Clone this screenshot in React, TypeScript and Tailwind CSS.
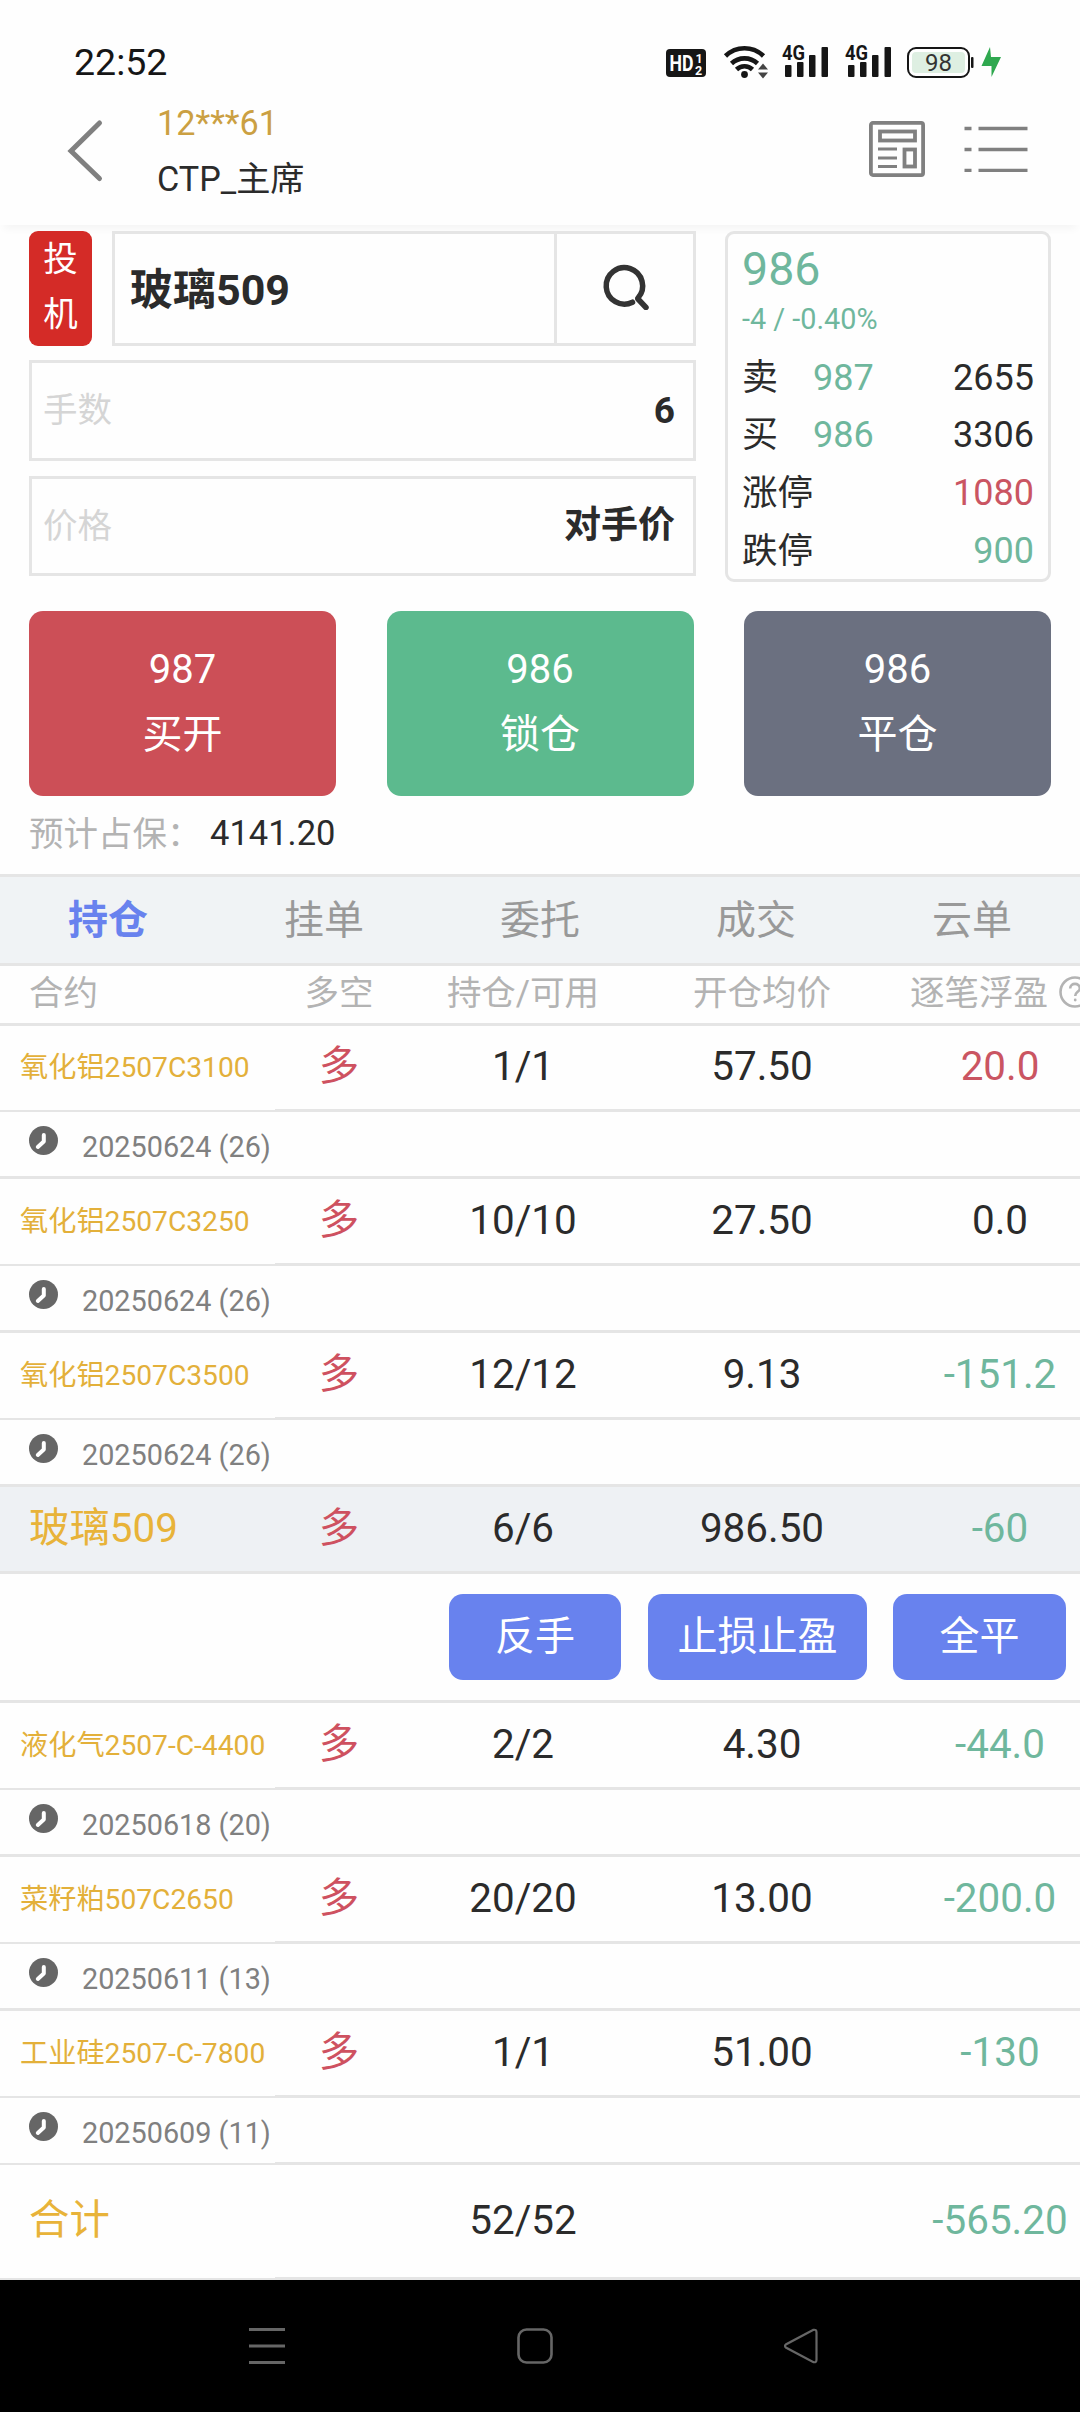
import React from "react";

type Position = {
  name: string;
  volume: string;
  price: string;
  profit: string;
  tone: "up" | "down" | "flat";
  expiry?: string;
};

const TONES = {
  up: "text-[#ca5562]",
  down: "text-[#6fb79d]",
  flat: "text-[#2b2b2b]",
};

const before: Position[] = [
  { name: "氧化铝2507C3100", volume: "1/1", price: "57.50", profit: "20.0", tone: "up", expiry: "20250624 (26)" },
  { name: "氧化铝2507C3250", volume: "10/10", price: "27.50", profit: "0.0", tone: "flat", expiry: "20250624 (26)" },
  { name: "氧化铝2507C3500", volume: "12/12", price: "9.13", profit: "-151.2", tone: "down", expiry: "20250624 (26)" },
];

const after: Position[] = [
  { name: "液化气2507-C-4400", volume: "2/2", price: "4.30", profit: "-44.0", tone: "down", expiry: "20250618 (20)" },
  { name: "菜籽粕507C2650", volume: "20/20", price: "13.00", profit: "-200.0", tone: "down", expiry: "20250611 (13)" },
  { name: "工业硅2507-C-7800", volume: "1/1", price: "51.00", profit: "-130", tone: "down", expiry: "20250609 (11)" },
];

const tabs = ["持仓", "挂单", "委托", "成交", "云单"];

export default function App() {
  return (
    <div className="flex h-[2412px] w-[1080px] flex-col overflow-hidden bg-[#fefefe] font-[Roboto,'Noto_Sans_CJK_SC',sans-serif] text-[#2b2b2b]">
      <StatusBar />
      <Header />

      {/* Order form */}
      <div className="flex h-[386px] shrink-0 justify-between px-[29px] pt-[6px]">
        <OrderForm />
        <QuoteCard />
      </div>

      {/* Order buttons */}
      <div className="flex h-[185px] shrink-0 justify-between px-[29px]">
        <OrderButton price="987" label="买开" className="bg-[#cc4f57]" />
        <OrderButton price="986" label="锁仓" className="bg-[#5cba8e]" />
        <OrderButton price="986" label="平仓" className="bg-[#6b7080]" />
      </div>
      <div className="flex h-[78px] shrink-0 pt-[12px] pl-[29px] text-[34.5px] leading-[50px]">
        <span className="w-[181px] pt-px text-[#b3b3b3]">预计占保：</span>
        <span>4141.20</span>
      </div>

      {/* Tabs */}
      <div className="grid h-[92px] shrink-0 grid-cols-5 border-y-3 border-[#e5e5e5] bg-[#f0f3f5] text-center text-[40px] leading-[88px] text-[#999]">
        {tabs.map((tab, idx) => (
          <div key={tab} className={idx === 0 ? "font-bold text-[#6882ee]" : ""}>
            {tab}
          </div>
        ))}
      </div>

      {/* Table head */}
      <div className="flex h-[60px] shrink-0 border-b-3 border-[#e5e5e5] text-[34.5px] leading-[55px] text-[#b3b3b3]">
        <div className="w-[275px] pl-[29px]">合约</div>
        <div className="w-[128px] text-center">多空</div>
        <div className="w-[240px] text-center">持仓/可用</div>
        <div className="w-[238px] text-center">开仓均价</div>
        <div className="flex w-[199px] pl-[29px] whitespace-nowrap">
          逐笔浮盈
          <svg className="mt-[10px] ml-[11px] h-[32px] w-[32px] shrink-0" viewBox="0 0 32 32" fill="none" stroke="#b3b3b3" strokeWidth="2.6">
            <circle cx="16" cy="16" r="14.5" />
            <path d="M11.2 12.4c0-6 9.6-6 9.6 0 0 3.4-4.6 3.6-4.6 7.6" />
            <circle cx="16.2" cy="24" r="1.4" fill="#b3b3b3" stroke="none" />
          </svg>
        </div>
      </div>

      {/* Positions */}
      {before.map((item, idx) => (
        <PositionRow key={item.name} item={item} first={idx === 0} />
      ))}

      <div className="flex h-[87px] shrink-0 border-b-3 border-[#e5e5e5] bg-[#eef1f4] text-[40.4px] leading-[84px]">
        <div className="w-[275px] pl-[29px] text-[#e8b339]">玻璃509</div>
        <Cells volume="6/6" price="986.50" profit="-60" tone="down" />
      </div>
      <div className="flex h-[129px] shrink-0 justify-end border-b-3 border-[#e5e5e5] pt-[20px] pr-[14px] text-[40px]">
        <ActionButton label="反手" className="mr-[27px] w-[172px]" />
        <ActionButton label="止损止盈" className="mr-[26px] w-[219px]" />
        <ActionButton label="全平" className="w-[173px]" />
      </div>

      {after.map((item, idx) => (
        <PositionRow key={item.name} item={item} last={idx === after.length - 1} />
      ))}

      {/* Total */}
      <div className="flex h-[115px] shrink-0 text-[40.4px] leading-[112px]">
        <div className="w-[275px] border-b-2 border-[#e5e5e5] pl-[29px] text-[#e8b339]">合计</div>
        <div className="flex border-b-3 border-[#e5e5e5]">
          <div className="w-[128px]" />
          <div className="w-[240px] text-center">52/52</div>
          <div className="w-[238px]" />
          <div className="w-[199px] pl-[39px] text-center text-[#6fb79d]">-565.20</div>
        </div>
      </div>

      <NavBar />
    </div>
  );
}

const StatusBar = () => (
  <div className="flex h-[96px] shrink-0 items-start pl-[74px]">
    <span className="w-[592px] pt-[40px] text-[37.5px] leading-[44px] text-[#161616]">22:52</span>
    <svg className="h-[96px] w-[360px]" viewBox="666 0 360 96" fill="#161616">
      {/* HD */}
      <rect x="666" y="49" width="40" height="28" rx="4" />
      <g fill="#fff" fontFamily="Roboto" fontWeight="700">
        <text x="669.5" y="71" fontSize="22" textLength="24" lengthAdjust="spacingAndGlyphs">HD</text>
        <text x="695.5" y="63" fontSize="12.5">1</text>
        <text x="695" y="74.5" fontSize="12.5">2</text>
      </g>
      {/* Wi-Fi */}
      <g fill="none" stroke="#161616" strokeWidth="4.6">
        <path d="M725.5 56a27 27 0 0 1 38 0" />
        <path d="M731.5 63.5a19 19 0 0 1 26 0" />
        <path d="M736.5 69.5a11.5 11.5 0 0 1 16 0" />
      </g>
      <circle cx="744.5" cy="74.5" r="3.4" />
      <path d="M758 69.5l5-6 5 6zM758 72.5l5 6 5-6z" fill="#444" />
      <Signal x={782} />
      <Signal x={845} />
      {/* Battery */}
      <rect x="908" y="48" width="61" height="29" rx="8" fill="#fff" stroke="#161616" strokeWidth="2" />
      <rect x="912" y="52" width="53" height="21" rx="4" fill="#deefe2" />
      <rect x="971" y="57" width="2.5" height="11" rx="1" />
      <text x="938.5" y="71" fontSize="24" fontFamily="Roboto" textAnchor="middle" fill="#333">98</text>
      <path d="M990 47l-8.5 19H991.5v11l9.5-20H991z" fill="#2fa84f" />
    </svg>
  </div>
);

const Signal = ({ x }: { x: number }) => (
  <g transform={`translate(${x} 0)`}>
    <text x="0" y="60" fontSize="20.5" fontFamily="Roboto" fontWeight="700" textLength="23" lengthAdjust="spacingAndGlyphs">
      4G
    </text>
    <rect x="3" y="65" width="6.5" height="12" rx="1" />
    <rect x="15" y="62" width="6.5" height="15" rx="1" />
    <rect x="27" y="55" width="6.5" height="22" rx="1" />
    <rect x="39.5" y="47" width="6.5" height="30" rx="1" />
  </g>
);

const Header = () => (
  <div className="flex h-[129px] shrink-0 items-start shadow-[0_8px_8px_-4px_rgba(0,0,0,0.04)]">
    <svg className="mt-[22px] ml-[66px] h-[66px] w-[38px]" viewBox="0 0 38 66" fill="none" stroke="#808080" strokeWidth="5" strokeLinecap="round">
      <path d="M33.5 5L5 33L33.5 60.5" />
    </svg>
    <div className="ml-[53px] w-[712px] text-[34.2px]">
      <div className="mt-[2px] leading-[50px] text-[#cba042]">12***61</div>
      <div className="mt-[7px] leading-[48px]">CTP_主席</div>
    </div>
    <svg className="mt-[25px] h-[56px] w-[56px]" viewBox="0 0 56 56" fill="none" stroke="#808080" strokeWidth="3.8">
      <rect x="1.9" y="1.9" width="52.2" height="52.2" rx="2" />
      <rect x="11" y="10.5" width="35" height="9" />
      <rect x="35.5" y="28.5" width="10.5" height="17" />
      <path d="M9 28h19M9 37h19M9 45.5h19" strokeWidth="3.2" />
    </svg>
    <svg className="mt-[30px] ml-[39px] h-[46px] w-[64px]" viewBox="0 0 64 46" fill="none" stroke="#808080" strokeWidth="3.5">
      <path d="M.5 2.5h7M14.5 2.5h49M.5 23.500h7M14.5 23.5h49M.5 44.5h7M14.5 44.5h49" />
    </svg>
  </div>
);

const OrderForm = () => (
  <div className="flex w-[667px] flex-col">
    <div className="flex h-[115px] justify-between">
      <div className="w-[63px] rounded-[9px] bg-[#d42b27] pt-px text-center text-[34.5px] leading-[55px] text-white">
        <div>投</div>
        <div>机</div>
      </div>
      <div className="flex w-[584px] border-3 border-[#e5e5e5]">
        <div className="w-[442px] border-r-3 border-[#e5e5e5] pl-[15px] text-[43px] leading-[112px] font-bold">玻璃509</div>
        <div className="flex flex-1 items-start justify-center pt-[28px] pl-[2px]">
          <svg className="h-[48px] w-[48px]" viewBox="0 0 48 48" fill="none" stroke="#333" strokeWidth="5.5" strokeLinecap="round">
            <path d="M30.5 40.2a18.2 18.2 0 1 1 5.5-4.2" />
            <path d="M36 37l8 8.5" />
          </svg>
        </div>
      </div>
    </div>
    <Field label="手数" value="6" className="mt-[14px] h-[101px] leading-[95px]" />
    <Field label="价格" value="对手价" className="mt-[15px] h-[100px] leading-[94px]" />
  </div>
);

const Field = ({ label, value, className }: { label: string; value: string; className: string }) => (
  <div className={`flex justify-between border-3 border-[#e5e5e5] pr-[18px] pl-[11px] text-[34.5px] ${className}`}>
    <span className="text-[#d5d5d5]">{label}</span>
    <span className="text-[37px] font-bold">{value}</span>
  </div>
);

const QuoteCard = () => (
  <div className="h-[351px] w-[326px] rounded-[9px] border-3 border-[#e5e5e5] pr-[14px] pl-[14px] text-[36px]">
    <div className="mt-[9px] text-[46.5px] leading-[52px] text-[#6fb79d]">986</div>
    <div className="mt-[4px] text-[28.8px] leading-[40px] text-[#6fb79d]">-4 / -0.40%</div>
    <div className="mt-[10.5px] flex flex-col leading-[57.7px]">
      <QuoteRow label="卖" price="987" value="2655" />
      <QuoteRow label="买" price="986" value="3306" />
      <QuoteRow label="涨停" value="1080" className="text-[#ca5562]" />
      <QuoteRow label="跌停" value="900" className="text-[#6fb79d]" />
    </div>
  </div>
);

const QuoteRow = ({
  label,
  price,
  value,
  className = "",
}: {
  label: string;
  price?: string;
  value: string;
  className?: string;
}) => (
  <div className="flex">
    <span className={price ? "w-[71px]" : "text-[35.5px]"}>{label}</span>
    {price && <span className="text-[#6fb79d]">{price}</span>}
    <span className={`ml-auto ${className}`}>{value}</span>
  </div>
);

const OrderButton = ({ price, label, className }: { price: string; label: string; className: string }) => (
  <button className={`w-[307px] rounded-[14px] pb-[3px] text-[40px] leading-[65px] text-white ${className}`}>
    <div>{price}</div>
    <div>{label}</div>
  </button>
);

const ActionButton = ({ label, className }: { label: string; className: string }) => (
  <button className={`h-[86px] rounded-[14px] bg-[#6882ee] text-[40px] leading-[86px] text-white ${className}`}>
    {label}
  </button>
);

const Cells = ({ volume, price, profit, tone }: Omit<Position, "name">) => (
  <>
    <div className="w-[128px] text-center text-[#ce5160]">多</div>
    <div className="w-[240px] text-center">{volume}</div>
    <div className="w-[238px] text-center">{price}</div>
    <div className={`w-[199px] pl-[39px] text-center ${TONES[tone]}`}>{profit}</div>
  </>
);

const PositionRow = ({ item, first, last }: { item: Position; first?: boolean; last?: boolean }) => (
  <div className="shrink-0">
    <div className={`flex ${first ? "h-[86px] leading-[82px]" : "h-[87px] leading-[84px]"}`}>
      <div className="w-[275px] border-b-2 border-[#e5e5e5] pt-px pl-[20px] text-[28.2px] whitespace-nowrap text-[#e3b03a]">
        {item.name}
      </div>
      <div className="flex border-b-3 border-[#e5e5e5] text-[40.4px]">
        <Cells {...item} />
      </div>
    </div>
    <div className="flex h-[67px]">
      <div className={`flex w-[275px] border-[#e5e5e5] pl-[29px] ${last ? "border-b-2" : "border-b-3"}`}>
        <svg className="mt-[14px] h-[29px] w-[29px]" viewBox="0 0 29 29">
          <circle cx="14.5" cy="14.5" r="14.5" fill="#666" />
          <path d="M14.8 9v6.5l-6 5.5" fill="none" stroke="#fff" strokeWidth="4" strokeLinecap="round" strokeLinejoin="round" />
        </svg>
        <span className="ml-[24px] text-[28.8px] leading-[71px] whitespace-nowrap text-[#808080]">{item.expiry}</span>
      </div>
      <div className="flex-1 border-b-3 border-[#e5e5e5]" />
    </div>
  </div>
);

const NavBar = () => (
  <div className="flex h-[132px] shrink-0 items-center bg-black pl-[249px]">
    <svg className="h-[38px] w-[572px]" viewBox="0 0 572 38" fill="none" stroke="#666" strokeWidth="3">
      <path d="M0 2.5h36M0 19h36M0 35.5h36" />
      <rect x="269.5" y="2.5" width="33" height="33" rx="8" strokeWidth="2.6" />
      <path d="M564.5 2.8L536.8 17.5q-1.6 1.5 0 3L564.5 35.2q3 .5 3-2.5V5.3q0-3-3-2.5z" strokeWidth="2.2" />
    </svg>
  </div>
);
